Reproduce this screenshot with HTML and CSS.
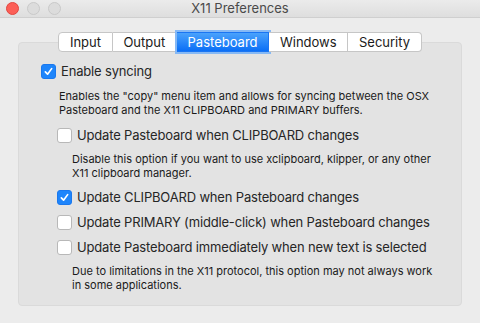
FILE: index.html
```html
<!DOCTYPE html>
<html lang="en">
<head>
  <meta charset="UTF-8" />
  <title>X11 Preferences</title>
  <link rel="stylesheet" href="styles.css">
</head>
<body>
  <div class="window">
    <div class="titlebar">
      <div class="lights">
        <span class="light close"></span>
        <span class="light"></span>
        <span class="light"></span>
      </div>
      <div class="title">X11 Preferences</div>
    </div>

    <div class="content">
      <div class="tabs">
        <span class="tab">Input</span>
        <span class="tab">Output</span>
        <span class="tab active">Pasteboard</span>
        <span class="tab">Windows</span>
        <span class="tab">Security</span>
      </div>

      <div class="group">
        <label class="row">
          <span class="box checked"><svg viewBox="0 0 14 14"><path d="M3.6 7.4 L6 9.9 L10.4 3.9"/></svg></span>
          Enable syncing
        </label>
        <p class="desc">Enables the "copy" menu item and allows for syncing between the OSX<br>Pasteboard and the X11 CLIPBOARD and PRIMARY buffers.</p>

        <label class="row sub">
          <span class="box"></span>
          Update Pasteboard when CLIPBOARD changes
        </label>
        <p class="desc sub">Disable this option if you want to use xclipboard, klipper, or any other<br>X11 clipboard manager.</p>

        <label class="row sub">
          <span class="box checked"><svg viewBox="0 0 14 14"><path d="M3.6 7.4 L6 9.9 L10.4 3.9"/></svg></span>
          Update CLIPBOARD when Pasteboard changes
        </label>
        <label class="row sub">
          <span class="box"></span>
          Update PRIMARY (middle-click) when Pasteboard changes
        </label>
        <label class="row sub">
          <span class="box"></span>
          Update Pasteboard immediately when new text is selected
        </label>
        <p class="desc sub">Due to limitations in the X11 protocol, this option may not always work<br>in some applications.</p>
      </div>
    </div>
  </div>
</body>
</html>
```

FILE: styles.css
```css
body {
  margin: 0;
  font-family: "Inter", "Liberation Sans", sans-serif;
  color: #262626;
  background: #ececec;
}
.window {
  width: 480px;
  height: 323px;
  overflow: hidden;
  background: #ececec;
}
.titlebar {
  height: 17px;
  display: flex;
  align-items: center;
  justify-content: center;
  position: relative;
  background: linear-gradient(to bottom, #ebebeb, #dedede);
  border-bottom: 1px solid #cfcfcf;
}
.lights {
  position: absolute;
  left: 6px;
  top: 2px;
  display: flex;
  gap: 8px;
}
.light {
  width: 11px;
  height: 11px;
  border-radius: 50%;
  background: #dcdcdc;
  border: 1px solid #c9c9c9;
}
.light.close {
  background: #fc5f57;
  border-color: #e2463f;
}
.title {
  font-size: 13px;
  color: #4a4a4a;
  margin-top: -2px;
}
.content {
  padding: 14px 18px 0;
}
.tabs {
  display: flex;
  justify-content: center;
  position: relative;
  z-index: 1;
  height: 20px;
}
.tab {
  font-size: 13px;
  line-height: 18px;
  padding: 0 10.7px;
  background: #fff;
  border: 1px solid #c6c6c6;
  border-left: none;
  color: #1a1a1a;
}
.tab:first-child {
  border-left: 1px solid #c6c6c6;
  border-radius: 4px 0 0 4px;
}
.tab:last-child {
  border-radius: 0 4px 4px 0;
}
.tab.active {
  color: #fff;
  background: linear-gradient(to bottom, #4aa2fc, #0b6ff6);
  border-color: #1b75f2;
  box-shadow: 0 0 0 2px #86b9f5;
}
.group {
  margin-top: -10px;
  height: 264px;
  box-sizing: border-box;
  padding: 20px 0 0 22px;
  background: #e3e3e3;
  border: 1px solid #dadada;
  border-radius: 4px;
  display: flex;
  flex-direction: column;
  gap: 9px;
}
.row {
  display: flex;
  align-items: center;
  gap: 5px;
  height: 16px;
  font-size: 13px;
  letter-spacing: -0.17px;
  color: #262626;
}
.row.sub {
  margin-left: 16px;
}
.box {
  width: 13px;
  height: 13px;
  border: 1px solid #b8b8b8;
  border-radius: 3px;
  background: #fff;
  flex: none;
}
.box.checked {
  background: #1e85fb;
  border-color: #1a78ee;
}
.box svg {
  display: block;
  width: 13px;
  height: 13px;
}
.box svg path {
  fill: none;
  stroke: #fff;
  stroke-width: 1.8;
  stroke-linecap: round;
  stroke-linejoin: round;
}
.desc {
  margin: 1px 0 1px 18px;
  font-size: 11px;
  line-height: 14px;
  color: #1a1a1a;
}
.desc.sub {
  margin: 0 0 0 31px;
}
```
